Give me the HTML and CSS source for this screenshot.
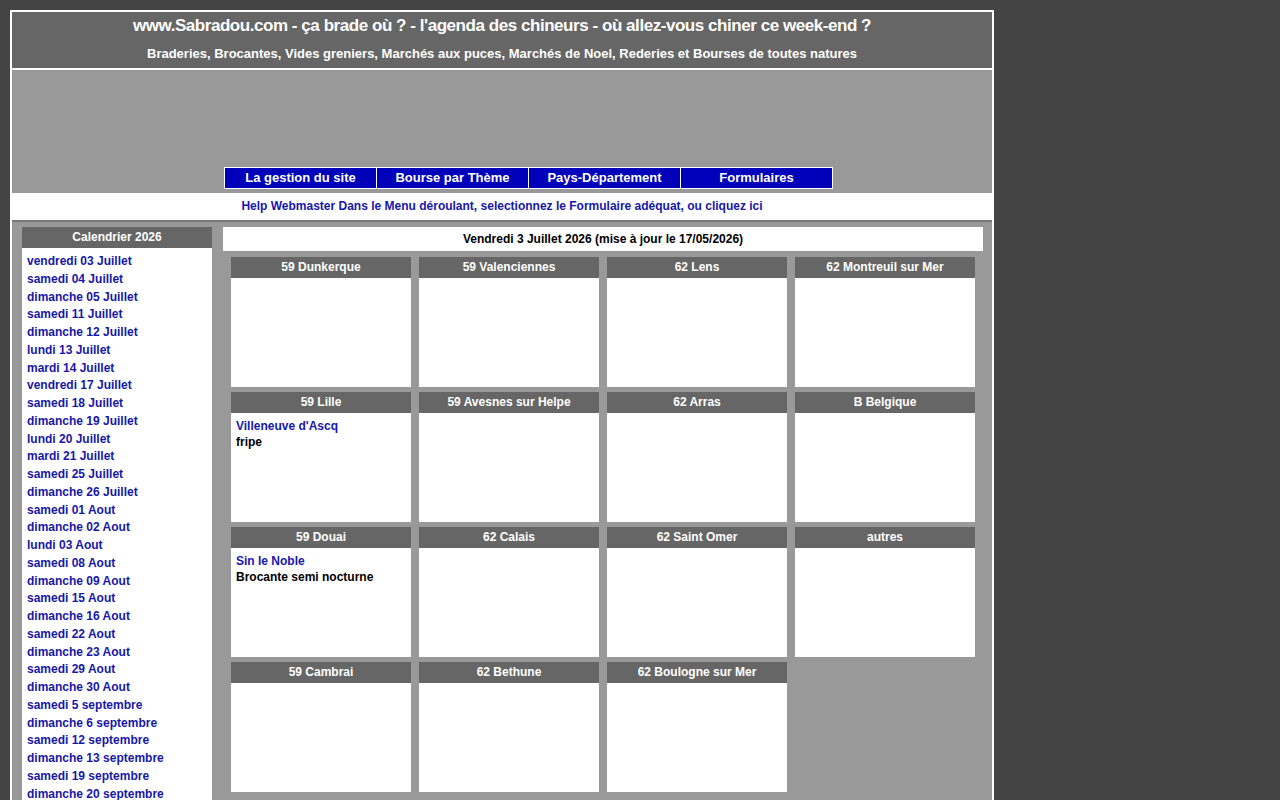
FILE: index.html
```html
<!DOCTYPE html>
<html lang="fr">
<head>
    <meta charset="UTF-8">
    <title>Sabradou - ça brade où ?</title>
    <link rel="stylesheet" href="styles.css">
</head>
<body>

    <div class="page">
        <div class="header">
            <h1>www.Sabradou.com - ça brade où ? - l'agenda des chineurs - où allez-vous chiner ce week-end ?</h1>
            <p>Braderies, Brocantes, Vides greniers, Marchés aux puces, Marchés de Noel, Rederies et Bourses de toutes natures</p>
        </div>

        <div class="banner">
            <div class="menu">
                <a href="#">La gestion du site</a>
                <a href="#">Bourse par Thème</a>
                <a href="#">Pays-Département</a>
                <a href="#">Formulaires</a>
            </div>
        </div>

        <div class="help">
            <a href="#">Help Webmaster Dans le Menu déroulant, selectionnez le Formulaire adéquat, ou cliquez ici</a>
        </div>

        <div class="content">
            <div class="calendar">
                <div class="calendar-title">Calendrier 2026</div>
                <div class="calendar-list">
                    <a href="#">vendredi 03 Juillet</a>
                    <a href="#">samedi 04 Juillet</a>
                    <a href="#">dimanche 05 Juillet</a>
                    <a href="#">samedi 11 Juillet</a>
                    <a href="#">dimanche 12 Juillet</a>
                    <a href="#">lundi 13 Juillet</a>
                    <a href="#">mardi 14 Juillet</a>
                    <a href="#">vendredi 17 Juillet</a>
                    <a href="#">samedi 18 Juillet</a>
                    <a href="#">dimanche 19 Juillet</a>
                    <a href="#">lundi 20 Juillet</a>
                    <a href="#">mardi 21 Juillet</a>
                    <a href="#">samedi 25 Juillet</a>
                    <a href="#">dimanche 26 Juillet</a>
                    <a href="#">samedi 01 Aout</a>
                    <a href="#">dimanche 02 Aout</a>
                    <a href="#">lundi 03 Aout</a>
                    <a href="#">samedi 08 Aout</a>
                    <a href="#">dimanche 09 Aout</a>
                    <a href="#">samedi 15 Aout</a>
                    <a href="#">dimanche 16 Aout</a>
                    <a href="#">samedi 22 Aout</a>
                    <a href="#">dimanche 23 Aout</a>
                    <a href="#">samedi 29 Aout</a>
                    <a href="#">dimanche 30 Aout</a>
                    <a href="#">samedi 5 septembre</a>
                    <a href="#">dimanche 6 septembre</a>
                    <a href="#">samedi 12 septembre</a>
                    <a href="#">dimanche 13 septembre</a>
                    <a href="#">samedi 19 septembre</a>
                    <a href="#">dimanche 20 septembre</a>
                    <a href="#">samedi 26 septembre</a>
                    <a href="#">dimanche 27 septembre</a>
                </div>
            </div>

            <div class="agenda">
                <div class="agenda-title">Vendredi 3 Juillet 2026 (mise à jour le 17/05/2026)</div>
                <div class="grid">
                    <div class="cell"><div class="cell-title">59 Dunkerque</div><div class="cell-body"></div></div>
                    <div class="cell"><div class="cell-title">59 Valenciennes</div><div class="cell-body"></div></div>
                    <div class="cell"><div class="cell-title">62 Lens</div><div class="cell-body"></div></div>
                    <div class="cell"><div class="cell-title">62 Montreuil sur Mer</div><div class="cell-body"></div></div>

                    <div class="cell"><div class="cell-title">59 Lille</div>
                        <div class="cell-body"><a href="#">Villeneuve d'Ascq</a><br>fripe</div></div>
                    <div class="cell"><div class="cell-title">59 Avesnes sur Helpe</div><div class="cell-body"></div></div>
                    <div class="cell"><div class="cell-title">62 Arras</div><div class="cell-body"></div></div>
                    <div class="cell"><div class="cell-title">B Belgique</div><div class="cell-body"></div></div>

                    <div class="cell"><div class="cell-title">59 Douai</div>
                        <div class="cell-body"><a href="#">Sin le Noble</a><br>Brocante semi nocturne</div></div>
                    <div class="cell"><div class="cell-title">62 Calais</div><div class="cell-body"></div></div>
                    <div class="cell"><div class="cell-title">62 Saint Omer</div><div class="cell-body"></div></div>
                    <div class="cell"><div class="cell-title">autres</div><div class="cell-body"></div></div>

                    <div class="cell"><div class="cell-title">59 Cambrai</div><div class="cell-body"></div></div>
                    <div class="cell"><div class="cell-title">62 Bethune</div><div class="cell-body"></div></div>
                    <div class="cell"><div class="cell-title">62 Boulogne sur Mer</div><div class="cell-body"></div></div>
                </div>
            </div>
        </div>
    </div>

</body>
</html>
```

FILE: styles.css
```css
body {
    margin: 10px;
    background-color: #444;
    font-family: "Liberation Sans", Arial, sans-serif;
    font-weight: bold;
    font-size: 12px;
}
a {
    color: #1717a8;
    text-decoration: none;
}
.page {
    width: 980px;
    border: 2px solid #fff;
    border-bottom: none;
    background: #fff;
}
.header {
    background: #666;
    color: white;
    text-align: center;
    height: 56px;
    margin-bottom: 2px;
}
.header h1 {
    margin: 0;
    padding-top: 3px;
    font-size: 17px;
    line-height: 22px;
    letter-spacing: -0.45px;
}
.header p {
    margin: 0;
    padding-top: 9px;
    font-size: 13px;
    line-height: 16px;
}
.banner {
    background: #999;
    height: 123px;
    display: flex;
    align-items: flex-end;
}
.menu {
    display: flex;
    margin-left: 212px;
    margin-bottom: 4px;
}
.menu a {
    width: 151px;
    height: 20px;
    line-height: 20px;
    border: 1px solid #fff;
    margin-right: -1px;
    background: #0000bb;
    color: white;
    text-align: center;
    font-size: 13px;
}
.help {
    background: white;
    text-align: center;
    height: 27px;
    line-height: 27px;
}
.content {
    background: #999;
    border-top: 2px solid #777;
    display: flex;
    padding: 5px 9px 20px 10px;
    gap: 11px;
    align-items: flex-start;
}
.calendar {
    width: 190px;
    background: white;
}
.calendar-title {
    background: #666;
    color: white;
    text-align: center;
    height: 21px;
    line-height: 20px;
}
.calendar-list {
    padding: 5px 5px 4px;
    line-height: 17.75px;
}
.calendar-list a {
    display: block;
}
.agenda {
    flex: 1;
}
.agenda-title {
    background: white;
    color: black;
    text-align: center;
    height: 24px;
    line-height: 24px;
}
.grid {
    display: grid;
    grid-template-columns: repeat(4, 180px);
    column-gap: 8px;
    row-gap: 5px;
    padding: 6px 8px;
}
.cell-title {
    background: #666;
    color: white;
    text-align: center;
    height: 21px;
    line-height: 20px;
}
.cell-body {
    background: white;
    color: black;
    height: 99px;
    padding: 5px;
    line-height: 16px;
}
```
